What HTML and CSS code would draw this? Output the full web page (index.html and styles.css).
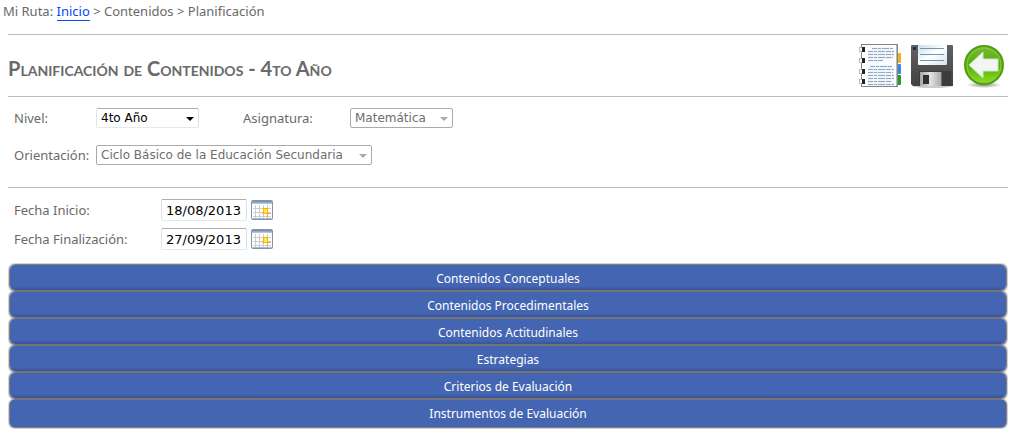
FILE: index.html
```html
<!DOCTYPE html>
<html lang="es">
<head>
<meta charset="utf-8">
<title>Planificación de Contenidos</title>
<link rel="stylesheet" href="styles.css">
</head>
<body>
<nav class="crumbs" aria-label="Mi Ruta">Mi Ruta: <a href="#inicio">Inicio</a> &gt; Contenidos &gt; Planificación</nav>
<svg class="defs" aria-hidden="true">
  <defs>
    <linearGradient id="gHead" x1="0" y1="0" x2="0" y2="1"><stop offset="0" stop-color="#6f86a6"/><stop offset="1" stop-color="#c3d0e2"/></linearGradient>
    <symbol id="cal" viewBox="0 0 22 20">
      <rect x=".5" y=".5" width="21" height="19" rx="1" fill="#fff" stroke="#8293ad"/>
      <rect x="1" y="1" width="20" height="3" fill="url(#gHead)"/>
      <path d="M2 8.500H20M2 12.500H20M2 16.500H20M4.500 5V18M8.500 5V18M12.500 5V18M16.500 5V18" stroke="#cbcbd0" fill="none"/>
      <path d="M16.500 14V18M11 13.500H20" stroke="#f0a080" fill="none"/>
      <rect x="12.500" y="8.500" width="4" height="5" fill="#ffec3d" stroke="#f5b800"/>
      <path d="M1 18.500H21" stroke="#a9b8cf"/>
    </symbol>
  </defs>
</svg>
<main class="page">
  <header class="head">
    <h1 class="title">Planificación de Contenidos - 4to Año</h1>
    <div class="tools">
      <button type="button" class="tool" aria-label="Ver planificación">
        <svg width="44" height="48" viewBox="0 0 44 48">
          <rect x="38" y="13" width="5" height="10" rx="1" fill="#f4b01c"/>
          <rect x="38" y="24" width="5" height="10" rx="1" fill="#3c86e8"/>
          <rect x="38" y="35" width="5" height="10" rx="1" fill="#1ca022"/>
          <rect x="3.500" y="4.500" width="36" height="42" fill="#fcfdfe" stroke="#858585"/>
          <path d="M38.500 5V46" stroke="#bbb"/>
          <g fill="#fff" stroke="#bbb"><rect x="1.500" y="7.500" width="4" height="4"/><rect x="1.500" y="18.500" width="4" height="4"/><rect x="1.500" y="29.500" width="4" height="4"/><rect x="1.500" y="39.500" width="4" height="4"/></g>
          <path d="M5.500 7V12M5.500 18V23M5.500 29V34M5.500 39V44" stroke="#222" stroke-width="3"/>
          <path d="M14 8.500H35M10 11.500H36M10 14.500H36M10 17.500H35M10 20.500H25M12 26.500H34M10 29.500H36M10 32.500H35M10 35.500H36M10 38.500H36M10 41.500H34M10 44.500H36" stroke="#e3eaf2" stroke-width="2"/>
          <path d="M14 8.500H35M10 11.500H36M10 14.500H36M10 17.500H35M10 20.500H25M12 26.500H34M10 29.500H36M10 32.500H35M10 35.500H36M10 38.500H36M10 41.500H34M10 44.500H36" stroke="#8ea8c8" stroke-dasharray="5 1 3 1 7 1"/>
        </svg>
      </button>
      <button type="button" class="tool" aria-label="Guardar">
        <svg width="44" height="48" viewBox="0 0 44 48">
          <defs>
            <linearGradient id="gDisk" x1="0" y1="0" x2="0" y2="1"><stop offset="0" stop-color="#626265"/><stop offset="1" stop-color="#414143"/></linearGradient>
            <linearGradient id="gLabel" x1="0" y1="0" x2="1" y2="1"><stop offset="0" stop-color="#c4dff0"/><stop offset=".5" stop-color="#fff"/><stop offset="1" stop-color="#d3e4ef"/></linearGradient>
            <linearGradient id="gMetal"><stop offset="0" stop-color="#a5a5a5"/><stop offset=".5" stop-color="#e2e2e2"/><stop offset="1" stop-color="#aaa"/></linearGradient>
          </defs>
          <ellipse cx="22" cy="46" rx="20" ry="2" fill="#ccc"/>
          <path d="M2 5H42Q43 5 43 6V46H3L1 44V6Q1 5 2 5Z" fill="url(#gDisk)"/>
          <rect x="3" y="7" width="3" height="3" fill="#2c2c2d"/>
          <rect x="39" y="39" width="2" height="4" fill="#303031"/>
          <path d="M8 5H37V24Q37 25 36 25H9Q8 25 8 24Z" fill="url(#gLabel)"/>
          <path d="M10 8.500H34M10 14.500H34M10 20.500H34" stroke="#7196ae"/>
          <rect x="9" y="31" width="32" height="15" fill="#3c3c3d"/>
          <rect x="10" y="32" width="21" height="14" fill="url(#gMetal)"/>
          <rect x="13" y="35" width="6" height="9" fill="#303033"/>
          <path d="M31.500 32V46" stroke="#6a6a6a"/>
        </svg>
      </button>
      <button type="button" class="tool" aria-label="Volver">
        <svg width="44" height="48" viewBox="0 0 44 48">
          <defs>
            <linearGradient id="gBall" x1="0" y1="0" x2="0" y2="1"><stop offset="0" stop-color="#7cb935"/><stop offset=".5" stop-color="#4fae0c"/><stop offset="1" stop-color="#8ee01c"/></linearGradient>
            <radialGradient id="gShade"><stop offset="0" stop-color="#888"/><stop offset="1" stop-color="#fff"/></radialGradient>
          </defs>
          <ellipse cx="22" cy="45" rx="18" ry="3" fill="url(#gShade)"/>
          <circle cx="22" cy="25" r="19" fill="url(#gBall)" stroke="#4f9f12" stroke-width="2"/>
          <circle cx="22" cy="25" r="17" fill="none" stroke="#8fd038" stroke-width="1"/>
          <path d="M7 25 21 12V19H36V31H21V38Z" fill="#f3f5f3" stroke="#d1e4c2"/>
        </svg>
      </button>
    </div>
  </header>
  <form class="form">
    <div class="filters">
      <label for="nivel">Nivel:</label>
      <select class="select" id="nivel"><option>4to Año</option></select>
      <label class="second" for="asignatura">Asignatura:</label>
      <select class="select" id="asignatura" disabled><option>Matemática</option></select>
      <label for="orientacion">Orientación:</label>
      <select class="select wide" id="orientacion" disabled><option>Ciclo Básico de la Educación Secundaria</option></select>
    </div>
    <div class="dates">
      <label for="inicio">Fecha Inicio:</label>
      <input class="date" id="inicio" type="text" value="18/08/2013">
      <button type="button" class="pick" aria-label="Elegir fecha de inicio"><svg width="22" height="20"><use href="#cal"/></svg></button>
      <label for="fin">Fecha Finalización:</label>
      <input class="date" id="fin" type="text" value="27/09/2013">
      <button type="button" class="pick" aria-label="Elegir fecha de finalización"><svg width="22" height="20"><use href="#cal"/></svg></button>
    </div>
  </form>
  <section class="accordion">
    <button type="button" class="bar">Contenidos Conceptuales</button>
    <button type="button" class="bar">Contenidos Procedimentales</button>
    <button type="button" class="bar">Contenidos Actitudinales</button>
    <button type="button" class="bar">Estrategias</button>
    <button type="button" class="bar">Criterios de Evaluación</button>
    <button type="button" class="bar">Instrumentos de Evaluación</button>
  </section>
</main>
</body>
</html>
```

FILE: styles.css
```css
* { box-sizing: border-box; }
body {
  margin: 0;
  background: #fff;
  color: #696969;
  font: 13px/20px "Trebuchet MS", "Noto Sans", sans-serif;
}
.defs { position: absolute; width: 0; height: 0; }
.crumbs { padding: 1px 3px 13px; }
.crumbs a {
  color: #034af3;
  text-decoration: none;
  border-bottom: 1px solid #034af3;
}
.page { margin: 0 7px 0 8px; }
.head {
  display: flex;
  align-items: center;
  justify-content: space-between;
  padding: 5px 2px 8px 0;
  border-top: 1px solid #bbb;
  border-bottom: 1px solid #bbb;
}
.title {
  margin: 8px 0 0;
  font-family: "Trebuchet MS", Lato, sans-serif;
  font-size: 20px;
  line-height: 24px;
  font-weight: 700;
  font-variant: small-caps;
}
.tools { display: flex; gap: 8px; }
.tool, .pick {
  display: block;
  padding: 0;
  border: 0;
  background: none;
  cursor: pointer;
}
.tool svg, .pick svg { display: block; }
.filters {
  display: grid;
  grid-template-columns: 82px 103px 151px 103px;
  row-gap: 17px;
  padding: 11px 6px 22px;
  border-bottom: 1px solid #bbb;
}
.second { padding-left: 44px; }
.select {
  height: 20px;
  padding: 1px 20px 0 4px;
  border: 1px solid #abadb3;
  border-color: #abadb3 #dbdfe6 #e3e9ef #e2e3ea;
  border-radius: 2px;
  appearance: none;
  color: #000;
  background: #fff url("data:image/svg+xml,%3Csvg xmlns='http://www.w3.org/2000/svg' width='8' height='4'%3E%3Cpath d='M0 0H8L4 4Z' fill='%23000'/%3E%3C/svg%3E") no-repeat right 4px top 8px;
  font: 12px/17px Verdana, "DejaVu Sans", sans-serif;
}
.select:disabled {
  border-color: #aaa;
  color: #6d6d6d;
  opacity: 1;
  background-image: url("data:image/svg+xml,%3Csvg xmlns='http://www.w3.org/2000/svg' width='8' height='4'%3E%3Cpath d='M0 0H8L4 4Z' fill='%23aaa'/%3E%3C/svg%3E");
}
.wide { grid-column: 2 / 5; justify-self: start; width: 276px; }
.dates {
  display: grid;
  grid-template-columns: 143px 86px 22px;
  align-items: center;
  gap: 7px 4px;
  padding: 11px 6px 13px;
}
.date {
  width: 100%;
  height: 22px;
  padding: 0 4px;
  border: 1px solid #abadb3;
  border-color: #abadb3 #dbdfe6 #e3e9ef #e2e3ea;
  border-radius: 2px;
  color: #000;
  background: #fff;
  font: 13px/20px Verdana, "DejaVu Sans", sans-serif;
}
.accordion {
  display: grid;
  gap: 2px;
  padding: 2px;
  overflow: hidden;
}
.bar {
  padding: 2px 0 0;
  border: 0;
  border-radius: 5px;
  color: #fff;
  background: linear-gradient(#4465b2 85%, #38549a);
  box-shadow: 0 0 2px 1px #555;
  font: inherit;
  font-size: 12px;
  line-height: 23px;
  cursor: pointer;
}
.bar:last-child {
  padding-bottom: 2px;
  background: #4465b2;
}
```
